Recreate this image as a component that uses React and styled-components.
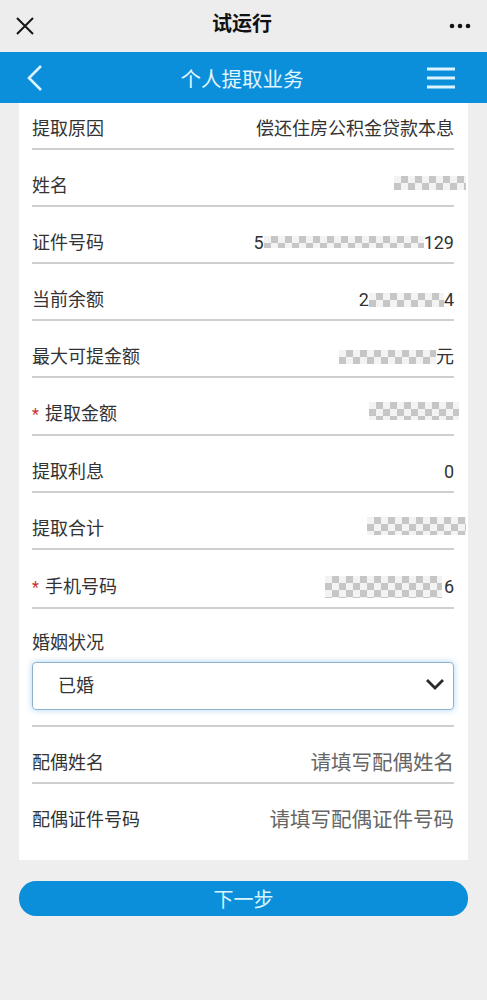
import styled, { createGlobalStyle } from "styled-components";

const GlobalStyle = createGlobalStyle`
  body {
    margin: 0;
    background: #eeeeee;
    font-family: Roboto, "Noto Sans CJK SC", sans-serif;
  }
`;

const Page = styled.div`
  width: 487px;
  min-height: 1000px;
  background: #eeeeee;
`;

const TopBar = styled.div`
  height: 52px;
  padding: 0 16px 0 15px;
  display: flex;
  align-items: center;
  justify-content: space-between;
  background: #ededed;
`;

const TopTitle = styled.div`
  font-size: 20px;
  font-weight: 700;
  color: #111;
  margin-top: -7px;
`;

const NavBar = styled.div`
  height: 51px;
  padding: 0 32px 0 27px;
  display: flex;
  align-items: center;
  justify-content: space-between;
  background: #0b8fdb;
`;

const NavTitle = styled.div`
  font-size: 20.5px;
  color: #e2f6ff;
  margin-left: 14px;
`;

const Card = styled.div`
  margin: 0 19px;
  padding: 0 14px 0 13px;
  background: #fff;
  font-size: 18px;
  line-height: 20px;
`;

const Row = styled.div`
  display: flex;
  align-items: center;
  justify-content: space-between;
  padding: ${(p) => (p.$first ? "16px" : "26px")} 0 ${(p) => (p.$last ? "30px" : "9px")};
  border-bottom: ${(p) => (p.$last ? "none" : "2px solid #cfcfcf")};
`;

const Label = styled.span`
  color: #333;
  white-space: nowrap;
`;

const Star = styled.span`
  color: #c8322f;
  font-size: 16px;
  margin-right: 6px;
`;

const Value = styled.span`
  color: ${(p) => (p.$placeholder ? "#666" : "#333")};
  font-size: ${(p) => (p.$placeholder ? "20.5px" : "18px")};
  display: flex;
  align-items: center;
  white-space: nowrap;
`;

const Mosaic = styled.span`
  display: inline-block;
  width: ${(p) => p.$w}px;
  height: ${(p) => p.$h || 14}px;
  margin-right: ${(p) => p.$mr || 0}px;
  margin-top: ${(p) => p.$mt || 0}px;
  background: repeating-conic-gradient(#c6c6c6 0 25%, #f3f3f3 0 50%) 0 0 / 14px 14px;
`;

const MarriageBlock = styled.div`
  padding: 24px 0 15px;
  border-bottom: 2px solid #cfcfcf;
`;

const SelectBox = styled.div`
  margin-top: 9px;
  height: 46px;
  padding: 0 8px 0 25px;
  display: flex;
  align-items: center;
  justify-content: space-between;
  border: 1px solid #8fb1c9;
  border-radius: 4px;
  box-shadow: 0 0 6px rgba(70, 160, 230, 0.45);
  color: #333;
`;

const NextButton = styled.button`
  display: block;
  width: 449px;
  height: 35px;
  margin: 21px 19px 0;
  border: none;
  border-radius: 17px;
  background: #0b8fdb;
  color: #d9f6ff;
  font-family: inherit;
  font-size: 20px;
  padding: 0;
`;

const rows = [
  { label: "提取原因", value: "偿还住房公积金贷款本息" },
  { label: "姓名", mosaic: { w: 72, mr: -12, h: 14, mt: -6 } },
  { label: "证件号码", pre: "5", mosaic: { w: 160, h: 12, mt: -2 }, post: "129" },
  { label: "当前余额", pre: "2", mosaic: { w: 75, h: 14 }, post: "4" },
  { label: "最大可提金额", mosaic: { w: 97, h: 14 }, post: "元" },
  { label: "提取金额", star: true, mosaic: { w: 90, h: 18, mr: -5, mt: -8 } },
  { label: "提取利息", value: "0" },
  { label: "提取合计", mosaic: { w: 99, h: 18, mr: -12, mt: -6 } },
  { label: "手机号码", star: true, mosaic: { w: 117, h: 22, mr: 2 }, post: "6" },
];

function CloseIcon() {
  return (
    <svg width="20" height="20" viewBox="0 0 20 20">
      <path d="M2 2 L18 18 M18 2 L2 18" stroke="#151515" strokeWidth="2" fill="none" />
    </svg>
  );
}

function DotsIcon() {
  return (
    <svg width="22" height="6" viewBox="0 0 22 6">
      <circle cx="3" cy="3" r="2.3" fill="#151515" />
      <circle cx="11" cy="3" r="2.3" fill="#151515" />
      <circle cx="19" cy="3" r="2.3" fill="#151515" />
    </svg>
  );
}

function BackIcon() {
  return (
    <svg width="16" height="28" viewBox="0 0 16 28">
      <path d="M14 2 L2 14 L14 26" stroke="#dcf4ff" strokeWidth="2.6" fill="none" />
    </svg>
  );
}

function MenuIcon() {
  return (
    <svg width="28" height="22" viewBox="0 0 28 22">
      <path d="M0 2 H28 M0 11 H28 M0 20 H28" stroke="#dcf4ff" strokeWidth="3" fill="none" />
    </svg>
  );
}

function ChevronDown() {
  return (
    <svg width="20" height="14" viewBox="0 0 20 14" style={{ marginTop: -4 }}>
      <path d="M2 3 L10 11 L18 3" stroke="#2b2b2b" strokeWidth="2.8" fill="none" />
    </svg>
  );
}

export default function App() {
  return (
    <Page>
      <GlobalStyle />
      <TopBar>
        <CloseIcon />
        <TopTitle>试运行</TopTitle>
        <DotsIcon />
      </TopBar>
      <NavBar>
        <BackIcon />
        <NavTitle>个人提取业务</NavTitle>
        <MenuIcon />
      </NavBar>
      <Card>
        {rows.map((r, i) => (
          <Row key={r.label} $first={i === 0}>
            <Label>
              {r.star && <Star>*</Star>}
              {r.label}
            </Label>
            <Value>
              {r.value}
              {r.pre}
              {r.mosaic && (
                <Mosaic $w={r.mosaic.w} $h={r.mosaic.h} $mr={r.mosaic.mr} $mt={r.mosaic.mt} />
              )}
              {r.post}
            </Value>
          </Row>
        ))}
        <MarriageBlock>
          <Label>婚姻状况</Label>
          <SelectBox>
            <span>已婚</span>
            <ChevronDown />
          </SelectBox>
        </MarriageBlock>
        <Row>
          <Label>配偶姓名</Label>
          <Value $placeholder>请填写配偶姓名</Value>
        </Row>
        <Row $last>
          <Label>配偶证件号码</Label>
          <Value $placeholder>请填写配偶证件号码</Value>
        </Row>
      </Card>
      <NextButton>下一步</NextButton>
    </Page>
  );
}
